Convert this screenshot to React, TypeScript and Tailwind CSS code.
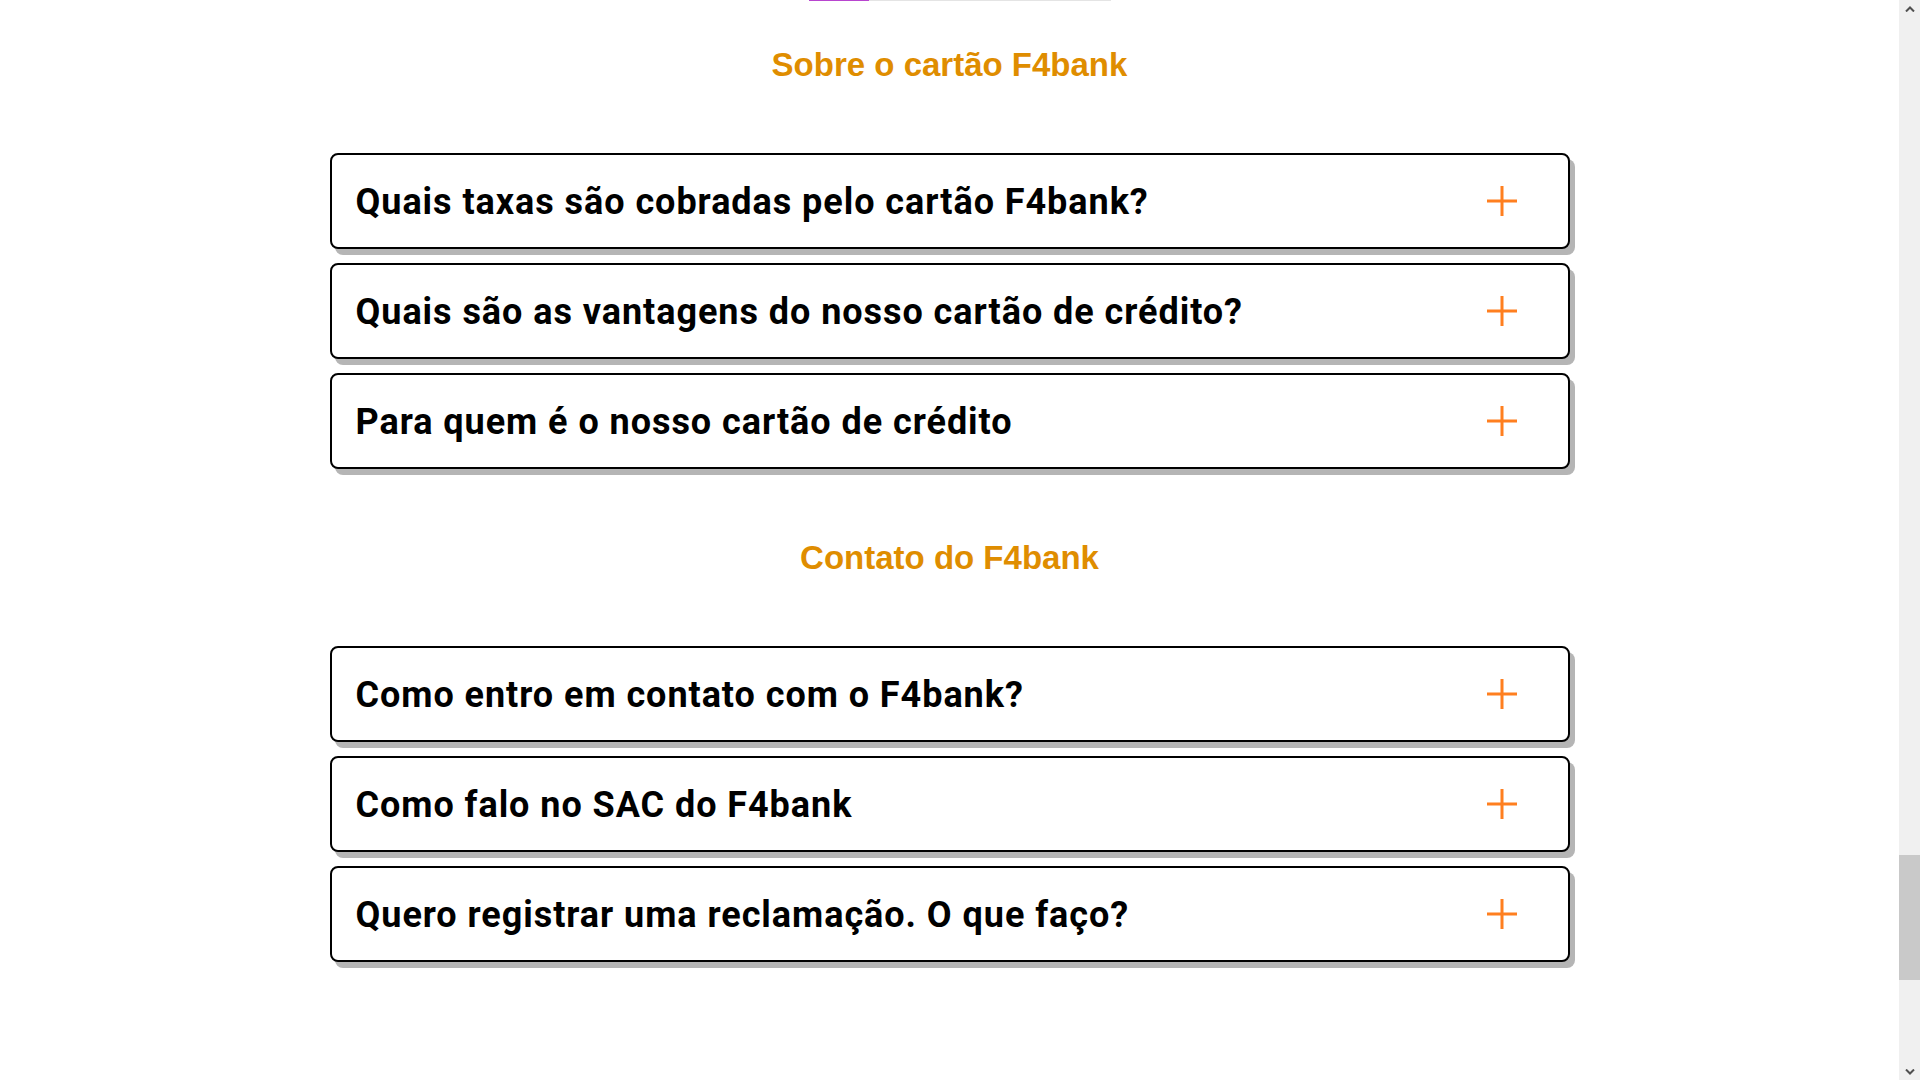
const sobre = [
  'Quais taxas são cobradas pelo cartão F4bank?',
  'Quais são as vantagens do nosso cartão de crédito?',
  'Para quem é o nosso cartão de crédito',
];

const contato = [
  'Como entro em contato com o F4bank?',
  'Como falo no SAC do F4bank',
  'Quero registrar uma reclamação. O que faço?',
];

const Plus = () => (
  <svg width="32" height="32" viewBox="0 0 32 32" className="shrink-0">
    <path d="M16 1v30M1 16h30" stroke="#ff7f1f" strokeWidth="3" fill="none" />
  </svg>
);

const Question = ({ text }: { text: string }) => (
  <div className="flex h-[96px] items-center justify-between rounded-[8px] border-2 border-black bg-white pl-[24px] pr-[50px] shadow-[5px_6px_0_#b5b5b5]">
    <h3 className="mt-[2px] text-[36px] font-bold tracking-[0.95px] text-black" style={{ fontFamily: 'Roboto, sans-serif' }}>{text}</h3>
    <Plus />
  </div>
);

const Section = ({ title, items }: { title: string; items: string[] }) => (
  <div>
    <h2 className="h-[40px] pt-[1px] text-center text-[33px] font-bold leading-[40px] text-[#df8d00]" style={{ fontFamily: '"Liberation Sans", Arial, sans-serif' }}>
      {title}
    </h2>
    <div className="mt-[69px] flex flex-col gap-[14px]">
      {items.map((q) => (
        <Question key={q} text={q} />
      ))}
    </div>
  </div>
);

const Chevron = ({ up }: { up?: boolean }) => (
  <svg width="10" height="6" viewBox="0 0 10 6">
    <path d={up ? 'M1 5.5L5 1.5L9 5.5' : 'M1 0.5L5 4.5L9 0.5'} stroke="#505050" strokeWidth="2" fill="none" />
  </svg>
);

export default function App() {
  return (
    <div className="flex h-screen w-full overflow-hidden bg-white">
      <main className="flex-1">
        <div className="ml-[809px] flex h-px w-[302px]">
          <div className="w-[60px] bg-[#b845cf]" />
          <div className="flex-1 bg-[#e4e4e4]" />
        </div>
        <div className="mx-auto mt-[43px] flex w-[1240px] flex-col gap-[68px]">
          <Section title="Sobre o cartão F4bank" items={sobre} />
          <Section title="Contato do F4bank" items={contato} />
        </div>
      </main>
      <div className="flex w-[21px] flex-col bg-[#f0f0f0]">
        <div className="flex h-[17px] items-center justify-center">
          <Chevron up />
        </div>
        <div className="flex-1">
          <div className="mt-[838px] h-[125px] bg-[#c9c9c9]" />
        </div>
        <div className="flex h-[17px] items-center justify-center">
          <Chevron />
        </div>
      </div>
    </div>
  );
}
